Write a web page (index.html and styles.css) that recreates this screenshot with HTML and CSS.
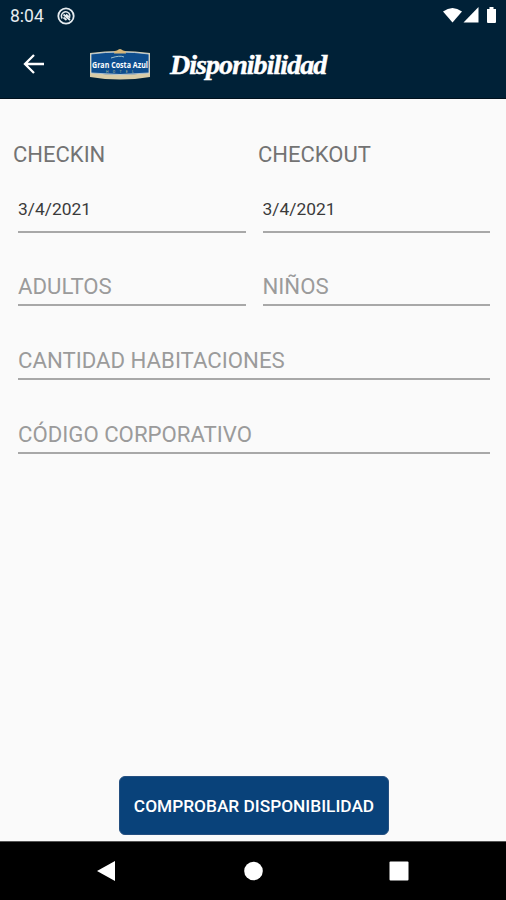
FILE: index.html
```html
<!DOCTYPE html>
<html lang="es">
<head>
    <meta charset="UTF-8">
    <meta name="viewport" content="width=device-width, initial-scale=1.0">
    <title>Disponibilidad</title>
    <link rel="stylesheet" href="styles.css">
</head>
<body>
    <div class="status">
        <span class="time">8:04</span>
        <svg class="status-app" width="18" height="18" viewBox="0 0 18 18" fill="none" stroke="#e6ecf0">
            <circle cx="9" cy="9" r="7.7" stroke-width="1.8"/>
            <path d="M5.200 11.500A4.500 4.500 0 0 1 6 5.800Q9 3.500 12 6.200A4.500 4.500 0 0 1 12.500 11" stroke-width="1.500"/>
            <path d="M6.500 7.500l6.500 5.500M9 7.500l3 2.500M6.500 10.500l3 2.500" stroke-width="1.700"/>
        </svg>
        <svg class="status-icons" width="56" height="18" viewBox="0 0 56 18" fill="#fff">
            <path d="M0 4.5Q9.5-2.5 19 4.5L9.5 15.5z"/>
            <path d="M20.500 15.500H35.500V0z"/>
            <path d="M44 2h2.500V0h4v2H53v13q0 1-1 1h-7q-1 0-1-1z"/>
        </svg>
    </div>
    <header class="header">
        <svg class="back" width="22" height="20" viewBox="0 0 22 20" fill="none" stroke="#fff" stroke-width="2.300">
            <path d="M21 10H2M11 1L2 10l9 9"/>
        </svg>
        <svg class="logo" width="62" height="36" viewBox="0 0 62 36">
            <path d="M1 7Q31 3 61 7V31Q31 36 1 31z" fill="#d9cda8"/>
            <path d="M2 8Q31 4 60 8V27Q31 30 2 27z" fill="#0d4d8d" stroke="#cbd8df" stroke-width=".8"/>
            <path d="M25 7.500q0-3 3-3 3-3 6 0 3 0 3 3z" fill="#d8b778"/>
            <path d="M22 12q9-3 13-1" fill="none" stroke="#9fc0cc" stroke-width="1"/>
            <text class="logo-name" x="3" y="22" textLength="56" lengthAdjust="spacingAndGlyphs">Gran Costa Azul</text>
            <text class="logo-hotel" x="17" y="27" textLength="28">HOTEL</text>
        </svg>
        <h1>Disponibilidad</h1>
    </header>
    <main class="box">
        <div class="row labels">
            <label for="checkin">CHECKIN</label>
            <label for="checkout">CHECKOUT</label>
        </div>
        <div class="row dates">
            <input class="date" type="text" id="checkin" value="3/4/2021">
            <input class="date" type="text" id="checkout" value="3/4/2021">
        </div>
        <div class="row">
            <input type="text" id="adultos" placeholder="ADULTOS">
            <input type="text" id="ninos" placeholder="NIÑOS">
        </div>
        <div class="row">
            <input type="text" id="habitaciones" placeholder="CANTIDAD HABITACIONES">
        </div>
        <div class="row">
            <input type="text" id="codigo" placeholder="CÓDIGO CORPORATIVO">
        </div>
        <button>COMPROBAR DISPONIBILIDAD</button>
    </main>
    <nav class="nav">
        <svg width="20" height="22" viewBox="0 0 20 22" fill="#fff"><path d="M0 11L18 1V21z"/></svg>
        <svg width="20" height="20" viewBox="0 0 20 20" fill="#fff"><circle cx="10.500" cy="10" r="9.300"/></svg>
        <svg width="20" height="20" viewBox="0 0 20 20" fill="#fff"><rect x=".5" y=".5" width="19" height="19" rx="1"/></svg>
    </nav>
</body>
</html>
```
FILE: styles.css
```css
* {
    box-sizing: border-box;
}
body {
    margin: 0;
    height: 900px;
    display: flex;
    flex-direction: column;
    font-family: Roboto, "Liberation Sans", sans-serif;
    background-color: #fafafa;
    overflow: hidden;
}
.status {
    height: 32px;
    display: flex;
    align-items: center;
    padding: 0 7px 0 10px;
    background-color: #002137;
}
.time {
    width: 47px;
    font-size: 17.5px;
    color: #e6ecf0;
}
.status-icons {
    margin-left: auto;
}
.header {
    height: 67px;
    display: flex;
    align-items: center;
    padding: 0 0 2px 23px;
    background-color: #002137;
    border-bottom: 1px solid #00111d;
}
.logo {
    margin-left: 44px;
    overflow: visible;
}
.logo-name {
    font-family: "Open Sans", sans-serif;
    font-size: 9px;
    font-weight: 700;
    fill: #fff;
}
.logo-hotel {
    font-size: 3.5px;
    fill: #b3b995;
}
h1 {
    margin: 2px 0 0 19px;
    font-family: "Liberation Serif", serif;
    font-size: 28px;
    font-weight: bold;
    font-style: italic;
    letter-spacing: -0.95px;
    line-height: 40px;
    color: #fff;
    -webkit-text-stroke: 0.5px #fff;
}
.box {
    flex: 1;
    display: flex;
    flex-direction: column;
    padding: 42px 16px 6px 18px;
}
.row {
    display: flex;
    gap: 17px;
    margin-bottom: 30px;
}
.labels {
    margin: 0 4px 18px -5px;
}
.dates {
    margin-bottom: 29px;
}
label {
    flex: 1;
    font-size: 22px;
    line-height: 28px;
    color: #737373;
}
input {
    flex: 1;
    min-width: 0;
    height: 44px;
    padding: 6px 0 0;
    border: none;
    border-bottom: 2px solid #a8a8a8;
    background: none;
    font-family: inherit;
    font-size: 22.2px;
    color: #3a3a3a;
    outline: none;
}
input::placeholder {
    color: #9b9b9b;
}
.date {
    height: 46px;
    padding: 0 0 1px;
    font-size: 17.4px;
}
button {
    align-self: center;
    width: 270px;
    height: 59px;
    margin: auto 0 0;
    padding: 0;
    border: 1px solid #244f80;
    border-radius: 6px;
    background-color: #09427a;
    font-family: inherit;
    font-size: 17.3px;
    font-weight: 500;
    color: #fff;
}
.nav {
    height: 59px;
    display: flex;
    align-items: center;
    justify-content: space-between;
    padding: 0 97px;
    background-color: #000;
    border-top: 1px solid #555;
}
```
